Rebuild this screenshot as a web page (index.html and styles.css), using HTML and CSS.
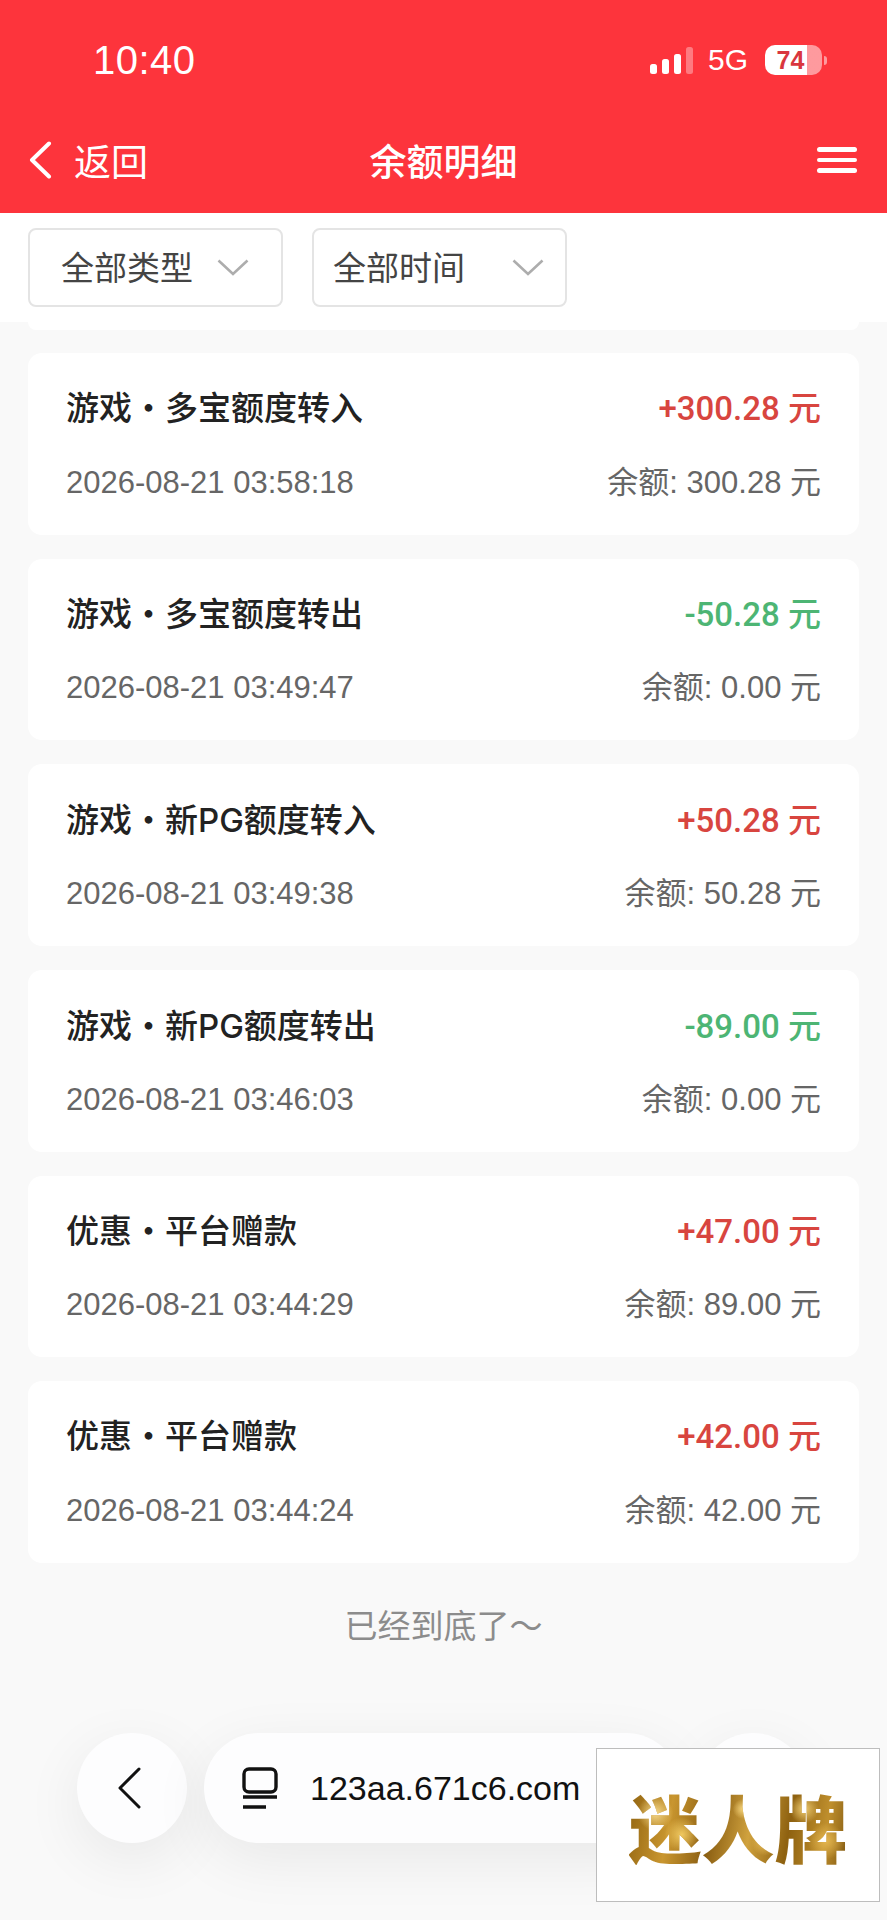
FILE: index.html
```html
<!DOCTYPE html>
<html lang="zh">
	<head>
		<meta charset="utf-8" />
		<title>余额明细</title>
		<link rel="stylesheet" href="styles.css">
	</head>
	<body>
		<header class="top">
			<div class="status">
				<span class="clock">10:40</span>
				<div class="status-right">
					<svg class="signal" width="43" height="27" viewBox="0 0 43 27">
						<rect x="0" y="17" width="7" height="10" rx="2.5" fill="#fff" />
						<rect x="12" y="12" width="7" height="15" rx="2.5" fill="#fff" />
						<rect x="24" y="7" width="7" height="20" rx="2.5" fill="#fff" />
						<rect x="36" y="0" width="7" height="27" rx="2.5" fill="#fff" fill-opacity=".35" />
					</svg>
					<span class="net">5G</span>
					<div class="battery"><span class="battery-num">74</span></div>
					<span class="battery-nub"></span>
				</div>
			</div>
			<nav class="navbar">
				<div class="nav-back">
					<svg width="24" height="38" viewBox="0 0 24 38"><path d="M21 2.5 4 19l17 16.5" fill="none" stroke="#fff" stroke-width="4" stroke-linecap="round" stroke-linejoin="round" /></svg>
					<span>返回</span>
				</div>
				<h1 class="nav-title">余额明细</h1>
				<div class="nav-menu"><i></i><i></i><i></i></div>
			</nav>
		</header>

		<div class="filters">
			<div class="select">
				<span>全部类型</span>
				<svg width="32" height="17" viewBox="0 0 32 17"><path d="M1.5 1.5 16 15 30.5 1.5" fill="none" stroke="#adadad" stroke-width="2.6" /></svg>
			</div>
			<div class="select tight">
				<span>全部时间</span>
				<svg width="32" height="17" viewBox="0 0 32 17"><path d="M1.5 1.5 16 15 30.5 1.5" fill="none" stroke="#adadad" stroke-width="2.6" /></svg>
			</div>
		</div>

		<main class="list">
			<div class="card-cut"></div>

			<div class="card">
				<div class="row">
					<span class="name">游戏・多宝额度转入</span>
					<span class="amount plus">+300.28 元</span>
				</div>
				<div class="row sub">
					<span>2026-08-21 03:58:18</span>
					<span>余额: 300.28 元</span>
				</div>
			</div>

			<div class="card">
				<div class="row">
					<span class="name">游戏・多宝额度转出</span>
					<span class="amount minus">-50.28 元</span>
				</div>
				<div class="row sub">
					<span>2026-08-21 03:49:47</span>
					<span>余额: 0.00 元</span>
				</div>
			</div>

			<div class="card">
				<div class="row">
					<span class="name">游戏・新<span class="latin">PG</span>额度转入</span>
					<span class="amount plus">+50.28 元</span>
				</div>
				<div class="row sub">
					<span>2026-08-21 03:49:38</span>
					<span>余额: 50.28 元</span>
				</div>
			</div>

			<div class="card">
				<div class="row">
					<span class="name">游戏・新<span class="latin">PG</span>额度转出</span>
					<span class="amount minus">-89.00 元</span>
				</div>
				<div class="row sub">
					<span>2026-08-21 03:46:03</span>
					<span>余额: 0.00 元</span>
				</div>
			</div>

			<div class="card">
				<div class="row">
					<span class="name">优惠・平台赠款</span>
					<span class="amount plus">+47.00 元</span>
				</div>
				<div class="row sub">
					<span>2026-08-21 03:44:29</span>
					<span>余额: 89.00 元</span>
				</div>
			</div>

			<div class="card">
				<div class="row">
					<span class="name">优惠・平台赠款</span>
					<span class="amount plus">+42.00 元</span>
				</div>
				<div class="row sub">
					<span>2026-08-21 03:44:24</span>
					<span>余额: 42.00 元</span>
				</div>
			</div>

			<div class="end">已经到底了～</div>
		</main>

		<div class="browser-bar">
			<div class="round">
				<svg width="24" height="42" viewBox="0 0 24 42"><path d="M22 2 3 21l19 19" fill="none" stroke="#111" stroke-width="3" stroke-linecap="round" stroke-linejoin="round" /></svg>
			</div>
			<div class="url">
				<svg width="36" height="42" viewBox="0 0 36 42">
					<rect x="2" y="2" width="32" height="23" rx="5" fill="none" stroke="#111" stroke-width="3.4" />
					<path d="M1 30h34M1 40h23" fill="none" stroke="#111" stroke-width="3.4" />
				</svg>
				<span>123aa.671c6.com</span>
			</div>
			<div class="round"></div>
		</div>

		<div class="logo-box"><span class="logo-text">迷人牌</span></div>
	</body>
</html>
```

FILE: styles.css
```css
* {
	box-sizing: border-box;
}

body {
	position: relative;
	width: 887px;
	height: 1920px;
	margin: 0;
	overflow: hidden;
	font-family: "Liberation Sans", "Noto Sans CJK SC", sans-serif;
	background-color: #f9f9f9;
}

.top {
	height: 213px;
	padding-top: 30px;
	background-color: #fd343c;
	color: #fff;
}

.status {
	display: flex;
	justify-content: space-between;
	align-items: center;
	height: 60px;
	padding: 0 60px 0 93px;
}

.clock {
	font-size: 40px;
	letter-spacing: .5px;
	line-height: 60px;
}

.status-right {
	display: flex;
	align-items: center;
}

.signal {
	margin-right: 15px;
}

.net {
	font-size: 30px;
	margin-right: 17px;
}

.battery {
	width: 57px;
	height: 30px;
	border-radius: 10px;
	background: linear-gradient(to right, #fff 74%, rgba(255, 255, 255, .5) 74%);
	text-align: center;
}

.battery-num {
	font-size: 25px;
	font-weight: bold;
	line-height: 30px;
	color: #d9363e;
	display: block;
	padding-right: 6px;
}

.battery-nub {
	width: 3px;
	height: 9px;
	margin-left: 2px;
	border-radius: 0 3px 3px 0;
	background-color: rgba(255, 255, 255, .5);
}

.navbar {
	display: flex;
	justify-content: space-between;
	align-items: center;
	height: 60px;
	margin-top: 40px;
	padding: 0 30px 0 28px;
	position: relative;
}

.nav-back {
	display: flex;
	align-items: center;
	gap: 22px;
	font-size: 37px;
}

.nav-title {
	position: absolute;
	left: 0;
	right: 0;
	margin: 0;
	text-align: center;
	font-size: 37px;
	font-weight: 500;
}

.nav-menu {
	display: flex;
	flex-direction: column;
	gap: 6px;
	width: 40px;
}

.nav-menu i {
	display: block;
	height: 4.5px;
	border-radius: 3px;
	background-color: #fff;
}

.filters {
	display: flex;
	gap: 29px;
	height: 109px;
	padding: 15px 28px 0;
	background-color: #fff;
}

.select {
	display: flex;
	justify-content: space-between;
	align-items: center;
	width: 255px;
	height: 79px;
	padding: 0 32px 0 31px;
	border: 2px solid #e4e4e4;
	border-radius: 8px;
	font-size: 33px;
	color: #444;
}

.select span {
	margin-bottom: 4px;
}

.select.tight {
	padding: 0 21px 0 19px;
}

.list {
	display: flex;
	flex-direction: column;
	gap: 24px;
	padding: 0 28px;
}

.card-cut {
	height: 8px;
	margin-bottom: -1px;
	border-radius: 0 0 14px 14px;
	background-color: #fff;
}

.card {
	display: flex;
	flex-direction: column;
	justify-content: space-between;
	height: 181.7px;
	padding: 38px 38px 34px;
	border-radius: 14px;
	background-color: #fff;
}

.row {
	display: flex;
	justify-content: space-between;
	align-items: baseline;
	height: 36px;
	line-height: 36px;
}

.name {
	font-family: Roboto, "Noto Sans CJK SC", sans-serif;
	font-size: 33px;
	font-weight: 500;
	color: #222;
}

.latin {
	font-family: Inter, sans-serif;
}

.amount {
	font-family: Roboto, "Noto Sans CJK SC", sans-serif;
	font-size: 33px;
	font-weight: 500;
}

.plus {
	color: #d8453f;
}

.minus {
	color: #4db574;
}

.sub {
	font-size: 31px;
	color: #666;
}

.end {
	margin-top: 13px;
	text-align: center;
	font-size: 33px;
	color: #8c8c8c;
}

/* floating bar of the browser, lies over the page */
.browser-bar {
	position: absolute;
	left: 77px;
	top: 1733px;
	display: flex;
	gap: 17px;
}

.round {
	display: flex;
	justify-content: center;
	align-items: center;
	width: 110px;
	height: 110px;
	padding-right: 6px;
	border-radius: 50%;
	background-color: #fdfdfe;
	box-shadow: 0 16px 60px rgba(0, 0, 0, .07);
}

.url {
	display: flex;
	align-items: center;
	gap: 32px;
	width: 477px;
	height: 110px;
	padding-left: 38px;
	border-radius: 55px;
	background-color: #fdfdfe;
	box-shadow: 0 16px 60px rgba(0, 0, 0, .07);
	font-size: 34px;
	color: #111;
}

.logo-box {
	position: absolute;
	left: 596px;
	top: 1748px;
	display: flex;
	justify-content: center;
	align-items: center;
	width: 284px;
	height: 154px;
	border: 1px solid #bdbdbd;
	background-color: #fff;
}

.logo-text {
	font-family: "Noto Sans CJK SC", sans-serif;
	font-size: 73px;
	font-weight: 900;
	line-height: 80px;
	color: transparent;
	background:
		radial-gradient(circle at 12% 35%, #f6d98a 0, transparent 9%),
		radial-gradient(circle at 24% 62%, #f0c860 0, transparent 10%),
		radial-gradient(circle at 52% 30%, #f4d27a 0, transparent 8%),
		radial-gradient(circle at 62% 72%, #e8bc58 0, transparent 9%),
		radial-gradient(circle at 80% 30%, #f0cd72 0, transparent 8%),
		radial-gradient(circle at 90% 70%, #e3b54f 0, transparent 9%),
		linear-gradient(100deg, #8f6210 0%, #c9962f 20%, #8a5e12 38%, #d0a23e 55%, #8e6110 72%, #bf8f2d 88%, #7d5510 100%);
	-webkit-background-clip: text;
	background-clip: text;
}
```
